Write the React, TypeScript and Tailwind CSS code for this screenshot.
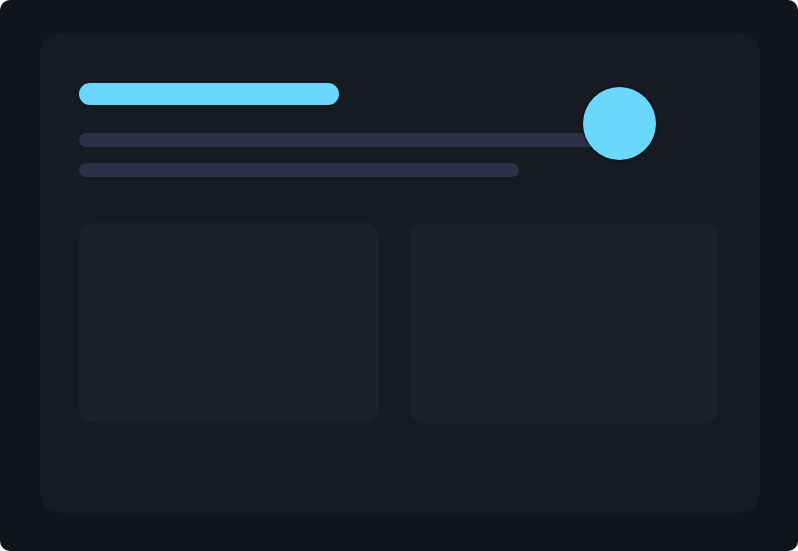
export default function App() {
  return (
    <div className="w-[798px] h-[551px] bg-white">
      <div className="w-[798px] h-[551px] rounded-[10px] bg-[#11141a] pt-[33px] pl-[40px]">
        <div className="relative w-[720px] h-[480px] rounded-[20px] bg-[#161a22] pt-[50px] pl-[39px]">
          <div className="w-[260px] h-[22px] rounded-full bg-[#6bd6fe]" />
          <div className="mt-[28px] w-[520px] h-[14px] rounded-full bg-[#2d3047]" />
          <div className="mt-[16px] w-[440px] h-[14px] rounded-full bg-[#2d3047]" />
          <div className="mt-[46px] flex gap-[30px]">
            <div className="w-[300px] h-[200px] rounded-[14px] bg-[#1b202b]" />
            <div className="w-[310px] h-[200px] rounded-[14px] bg-[#1c1f2a]" />
          </div>
          <div className="absolute left-[543px] top-[54px] w-[73px] h-[73px] rounded-full bg-[#6bd6fe] shadow-[0_0_2px_1px_rgba(10,14,20,0.8)]" />
        </div>
      </div>
    </div>
  );
}
